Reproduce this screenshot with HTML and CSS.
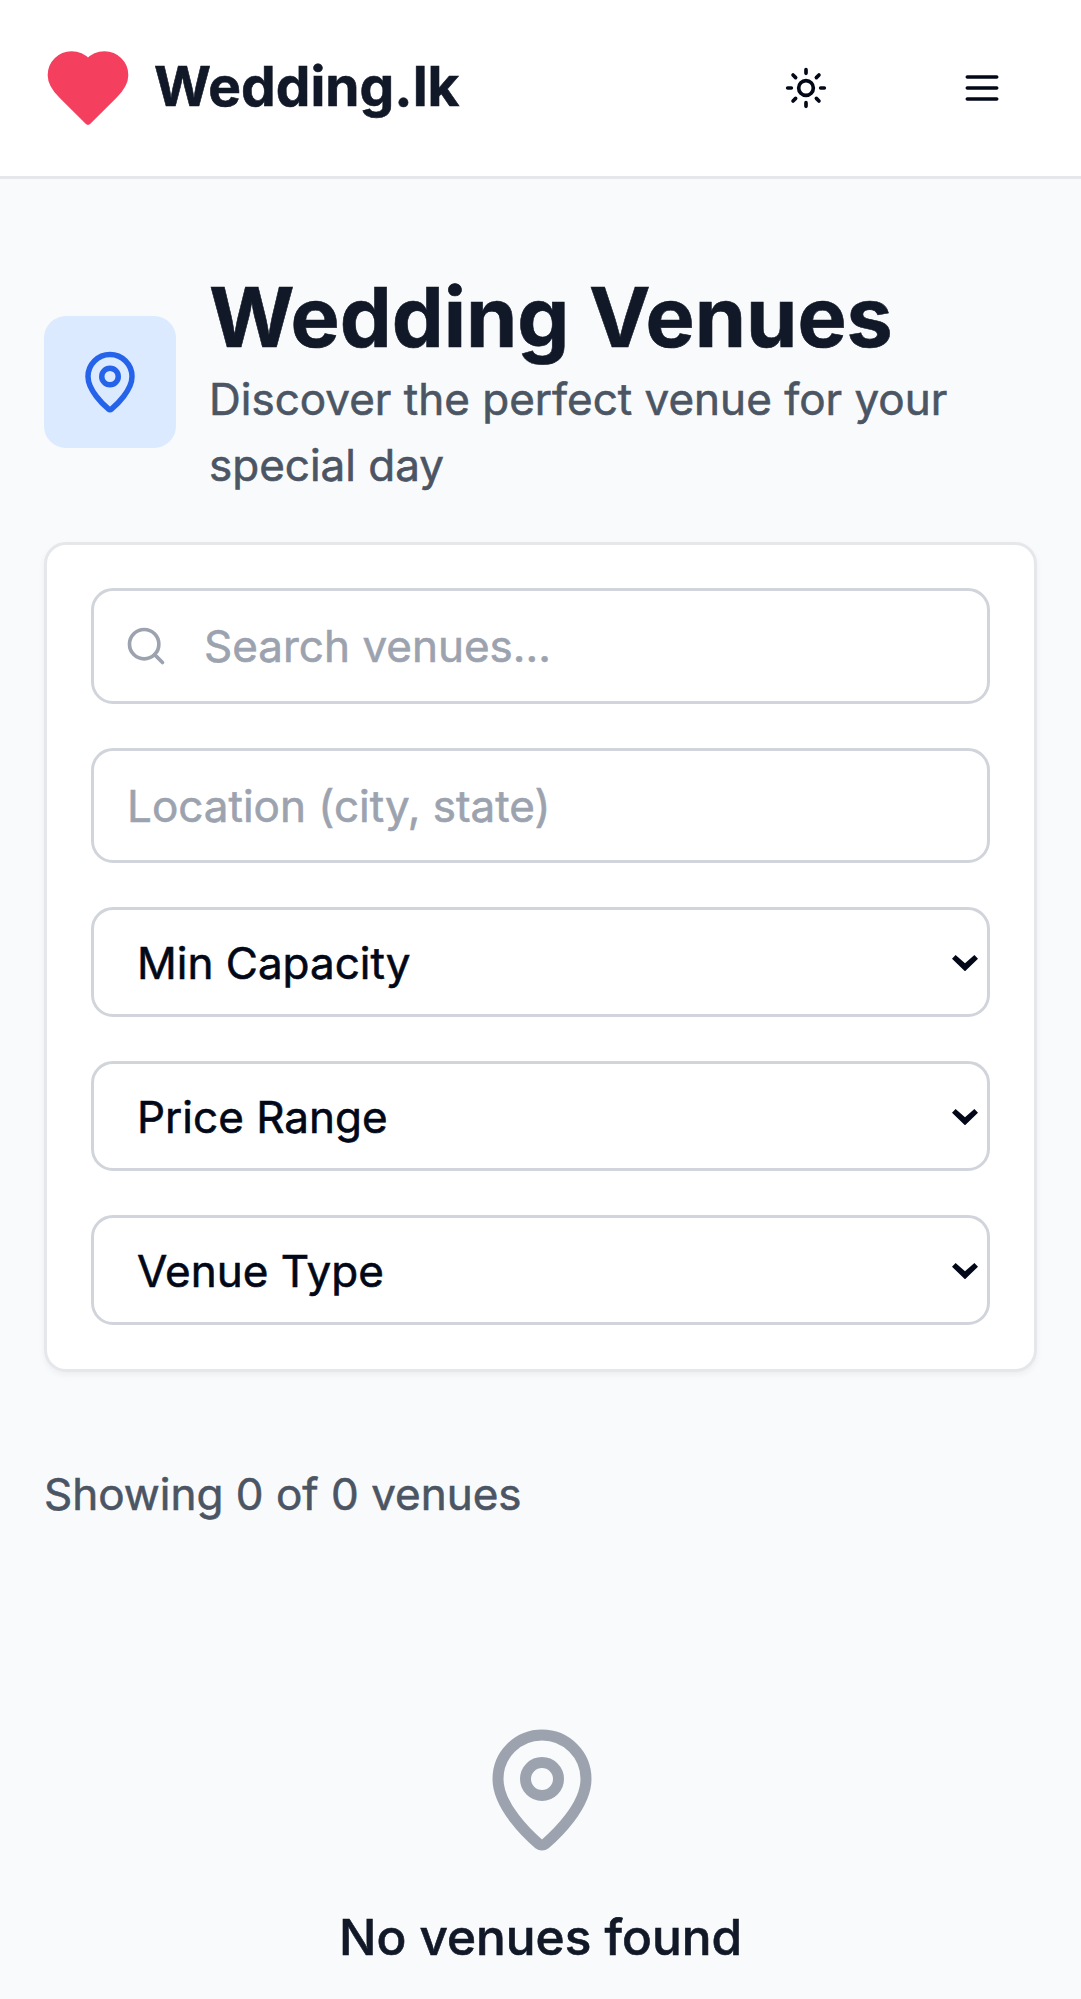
FILE: index.html
```html
<!DOCTYPE html>
<html lang="en">
<head>
<meta charset="utf-8">
<title>Wedding Venues - Wedding.lk</title>
<link rel="stylesheet" href="styles.css">
</head>
<body>
<header class="header">
  <a class="brand">
    <svg class="brand-icon" viewBox="0 0 24 24"><path d="M19 14c1.49-1.46 3-3.21 3-5.5A5.5 5.5 0 0 0 16.5 3c-1.76 0-3 .5-4.5 2-1.5-1.5-2.74-2-4.5-2A5.5 5.5 0 0 0 2 8.5c0 2.3 1.5 4.05 3 5.5l7 7Z"/></svg>
    <span class="brand-name">Wedding.lk</span>
  </a>
  <div class="actions">
    <button class="icon-button" aria-label="Toggle theme">
      <svg viewBox="0 0 24 24"><circle cx="12" cy="12" r="4"/><path d="M12 2v2M12 20v2M4.93 4.93l1.41 1.41M17.66 17.66l1.41 1.41M2 12h2M20 12h2M6.34 17.66l-1.41 1.41M19.07 4.93l-1.41 1.41"/></svg>
    </button>
    <button class="icon-button" aria-label="Open menu">
      <svg viewBox="0 0 24 24"><path d="M4 6h16M4 12h16M4 18h16"/></svg>
    </button>
  </div>
</header>
<main class="page">
  <section class="intro">
    <div class="intro-icon">
      <svg viewBox="0 0 24 24"><path d="M20 10c0 4.993-5.539 10.193-7.399 11.799a1 1 0 0 1-1.202 0C9.539 20.193 4 14.993 4 10a8 8 0 0 1 16 0"/><circle cx="12" cy="10" r="3"/></svg>
    </div>
    <div>
      <h1 class="title">Wedding Venues</h1>
      <p class="subtitle">Discover the perfect venue for your special day</p>
    </div>
  </section>
  <form class="filters">
    <label class="field search">
      <svg viewBox="0 0 24 24"><circle cx="11" cy="11" r="8"/><path d="m21 21-4.3-4.3"/></svg>
      <input class="input" type="text" placeholder="Search venues...">
    </label>
    <label class="field"><input class="input" type="text" placeholder="Location (city, state)"></label>
    <div class="field select"><span>Min Capacity</span><svg viewBox="0 0 26 16.5"><path d="M0 3.7 3.6 0 13 8.2 22.4 0 26 3.7 13 16.3Z"/></svg></div>
    <div class="field select"><span>Price Range</span><svg viewBox="0 0 26 16.5"><path d="M0 3.7 3.6 0 13 8.2 22.4 0 26 3.7 13 16.3Z"/></svg></div>
    <div class="field select"><span>Venue Type</span><svg viewBox="0 0 26 16.5"><path d="M0 3.7 3.6 0 13 8.2 22.4 0 26 3.7 13 16.3Z"/></svg></div>
  </form>
  <p class="count">Showing 0 of 0 venues</p>
  <section class="empty">
    <svg viewBox="0 0 24 24"><path d="M20 10c0 4.993-5.539 10.193-7.399 11.799a1 1 0 0 1-1.202 0C9.539 20.193 4 14.993 4 10a8 8 0 0 1 16 0"/><circle cx="12" cy="10" r="3"/></svg>
    <h3 class="empty-title">No venues found</h3>
  </section>
</main>
</body>
</html>
```
FILE: styles.css
```css
* { box-sizing: border-box; margin: 0; padding: 0; }
html { overflow: hidden; }
body {
  height: 1999px;
  overflow: hidden;
  background: #f9fafb;
  color: #020817;
  font-family: Inter, "Liberation Sans", sans-serif;
  font-size: 44px;
  line-height: 66px;
  -webkit-text-stroke: 0.6px currentColor;
}
svg {
  display: block;
  fill: none;
  stroke: currentColor;
  stroke-width: 2;
  stroke-linecap: round;
  stroke-linejoin: round;
}
.header {
  display: flex;
  align-items: center;
  justify-content: space-between;
  height: 179px;
  padding: 0 44px;
  background: #fff;
  border-bottom: 3px solid #e5e7eb;
}
.brand { display: flex; align-items: center; gap: 22px; color: #111827; }
.brand-icon { width: 88px; height: 88px; fill: currentColor; color: #f43f5e; }
.brand-name { padding-bottom: 3px; font-size: 55px; font-weight: 700; line-height: 77px; }
.actions { display: flex; gap: 66px; }
.icon-button {
  display: grid;
  place-items: center;
  width: 110px;
  height: 99px;
  border: 0;
  background: none;
  color: #020817;
}
.icon-button svg { width: 44px; height: 44px; }
.page { padding: 87px 44px; }
.intro { display: flex; align-items: center; gap: 33px; margin-bottom: 44px; }
.intro-icon { flex: none; padding: 33px; border-radius: 22px; background: #dbeafe; color: #2563eb; }
.intro-icon svg { width: 66px; height: 66px; }
.title { padding: 4px 0 1px; font-size: 82.5px; font-weight: 700; line-height: 95px; color: #111827; }
.subtitle { color: #4b5563; }
.filters {
  display: flex;
  flex-direction: column;
  gap: 44px;
  padding: 43px 44px 44px;
  background: #fff;
  border: 3px solid #e5e7eb;
  border-radius: 22px;
  box-shadow: 0 3px 6px rgba(0, 0, 0, 0.05);
}
.field {
  display: flex;
  align-items: center;
  height: 115.5px;
  padding: 1px 33px 0;
  background: #fff;
  border: 3px solid #d1d5db;
  border-radius: 22px;
}
.search { gap: 36px; padding-left: 30px; }
.search svg { flex: none; width: 44px; height: 44px; color: #9ca3af; }
.input {
  flex: 1;
  min-width: 0;
  border: 0;
  outline: 0;
  background: none;
  font: inherit;
}
.input::placeholder { color: #9ca3af; opacity: 1; }
.select { justify-content: space-between; height: 110px; padding: 2px 9px 0 43px; }
.select svg { width: 26px; height: 16.5px; fill: currentColor; stroke: none; }
.count { margin-top: 89px; color: #4b5563; }
.empty { display: flex; flex-direction: column; align-items: center; margin-top: 197px; }
.empty svg { width: 132px; height: 132px; margin-left: 2px; color: #9ca3af; }
.empty-title { margin-top: 43px; font-size: 49.5px; font-weight: 500; line-height: 77px; color: #111827; }
```
